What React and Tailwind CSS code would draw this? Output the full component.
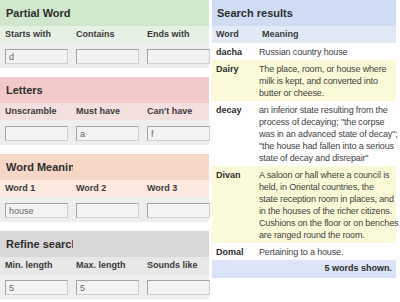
import React from 'react';

const blocks = [
    {
        title: 'Partial Word',
        head: 'bg-[#cfe8cb]',
        sub: 'bg-[#e7f0e4]',
        labels: ['Starts with', 'Contains', 'Ends with'],
        values: ['d', '', ''],
    },
    {
        title: 'Letters',
        head: 'bg-[#f1c9c9]',
        sub: 'bg-[#f4dfdf]',
        labels: ['Unscramble', 'Must have', "Can't have"],
        values: ['', 'a', 'f'],
    },
    {
        title: 'Word Meaning',
        head: 'bg-[#f6d6c6]',
        sub: 'bg-[#fbe8df]',
        labels: ['Word 1', 'Word 2', 'Word 3'],
        values: ['house', '', ''],
    },
    {
        title: 'Refine search',
        head: 'bg-[#d7d7d7]',
        sub: 'bg-[#e7e7e7]',
        labels: ['Min. length', 'Max. length', 'Sounds like'],
        values: ['5', '5', ''],
    },
];

const results = [
    { word: 'dacha', lines: ['Russian country house'] },
    { word: 'Dairy', lines: ['The place, room, or house where', 'milk is kept, and converted into', 'butter or cheese.'] },
    {
        word: 'decay',
        lines: [
            'an inferior state resulting from the',
            'process of decaying; "the corpse',
            'was in an advanced state of decay";',
            '"the house had fallen into a serious',
            'state of decay and disrepair"',
        ],
    },
    {
        word: 'Divan',
        lines: [
            'A saloon or hall where a council is',
            'held, in Oriental countries, the',
            'state reception room in places, and',
            'in the houses of the richer citizens.',
            'Cushions on the floor or on benches',
            'are ranged round the room.',
        ],
    },
    { word: 'Domal', lines: ['Pertaining to a house.'] },
];

// title is clipped on purpose, as in the original panel
const Block = ({ title, head, sub, labels, values }) => (
    <div className="mb-[9px]">
        <div className={`h-[26px] flex items-center px-[6px] ${head}`}>
            <div className="w-[67px] overflow-hidden whitespace-nowrap text-[11px] font-bold text-[#2e2e2e]">
                {title}
            </div>
        </div>
        <div className={`h-[17px] grid grid-cols-[63px_63px_63px] gap-x-[8px] px-[5px] items-center ${sub}`}>
            {labels.map((label) => (
                <div key={label} className="text-[9px] font-bold text-[#3a3a3a] whitespace-nowrap">{label}</div>
            ))}
        </div>
        <div className="h-[25px] grid grid-cols-[63px_63px_63px] gap-x-[8px] px-[5px] pt-[6px] bg-[#eeeeee]">
            {values.map((v, i) => (
                <input
                    key={i}
                    readOnly
                    value={v}
                    className="h-[15px] w-[63px] border border-[#cfcfcf] border-t-[#a3a3a3] border-l-[#a3a3a3] bg-[#f3f3f3] pl-[3px] text-[9px] text-[#666] outline-none"
                />
            ))}
        </div>
    </div>
);

export default function App() {
    return (
        <div className="w-[400px] h-[302px] overflow-hidden bg-white flex text-[#333] font-[family-name:'Liberation_Sans',Arial,sans-serif]">
            <div className="w-[209px] shrink-0">
                {blocks.map((b) => (
                    <Block key={b.title} {...b} />
                ))}
            </div>

            <div className="w-[184px] ml-[3px] shrink-0">
                <div className="h-[26px] flex items-center px-[5px] bg-[#cedcf4] text-[11px] font-bold text-[#2e2e2e]">
                    Search results
                </div>
                <div className="h-[17px] flex items-center bg-[#e1e9f6] text-[9px] font-bold text-[#3a3a3a]">
                    <div className="w-[47px] pl-[4px]">Word</div>
                    <div className="pl-[3px]">Meaning</div>
                </div>
                {results.map((r, i) => (
                    <div
                        key={r.word}
                        className={`flex pt-[3px] pb-[2px] text-[9px] leading-[12px] ${i % 2 === 1 ? 'bg-[#fafad8]' : 'bg-white'}`}
                    >
                        <div className="w-[47px] shrink-0 pl-[4px] font-bold text-[#2e2e2e]">{r.word}</div>
                        <div className="whitespace-nowrap tracking-[-0.15px] text-[#444]">
                            {r.lines.map((line) => (
                                <div key={line}>{line}</div>
                            ))}
                        </div>
                    </div>
                ))}
                <div className="h-[18px] flex items-center justify-end pr-[4px] bg-[#dbe4f6] text-[9px] font-bold text-[#2e2e2e]">
                    5 words shown.
                </div>
            </div>
        </div>
    );
}
